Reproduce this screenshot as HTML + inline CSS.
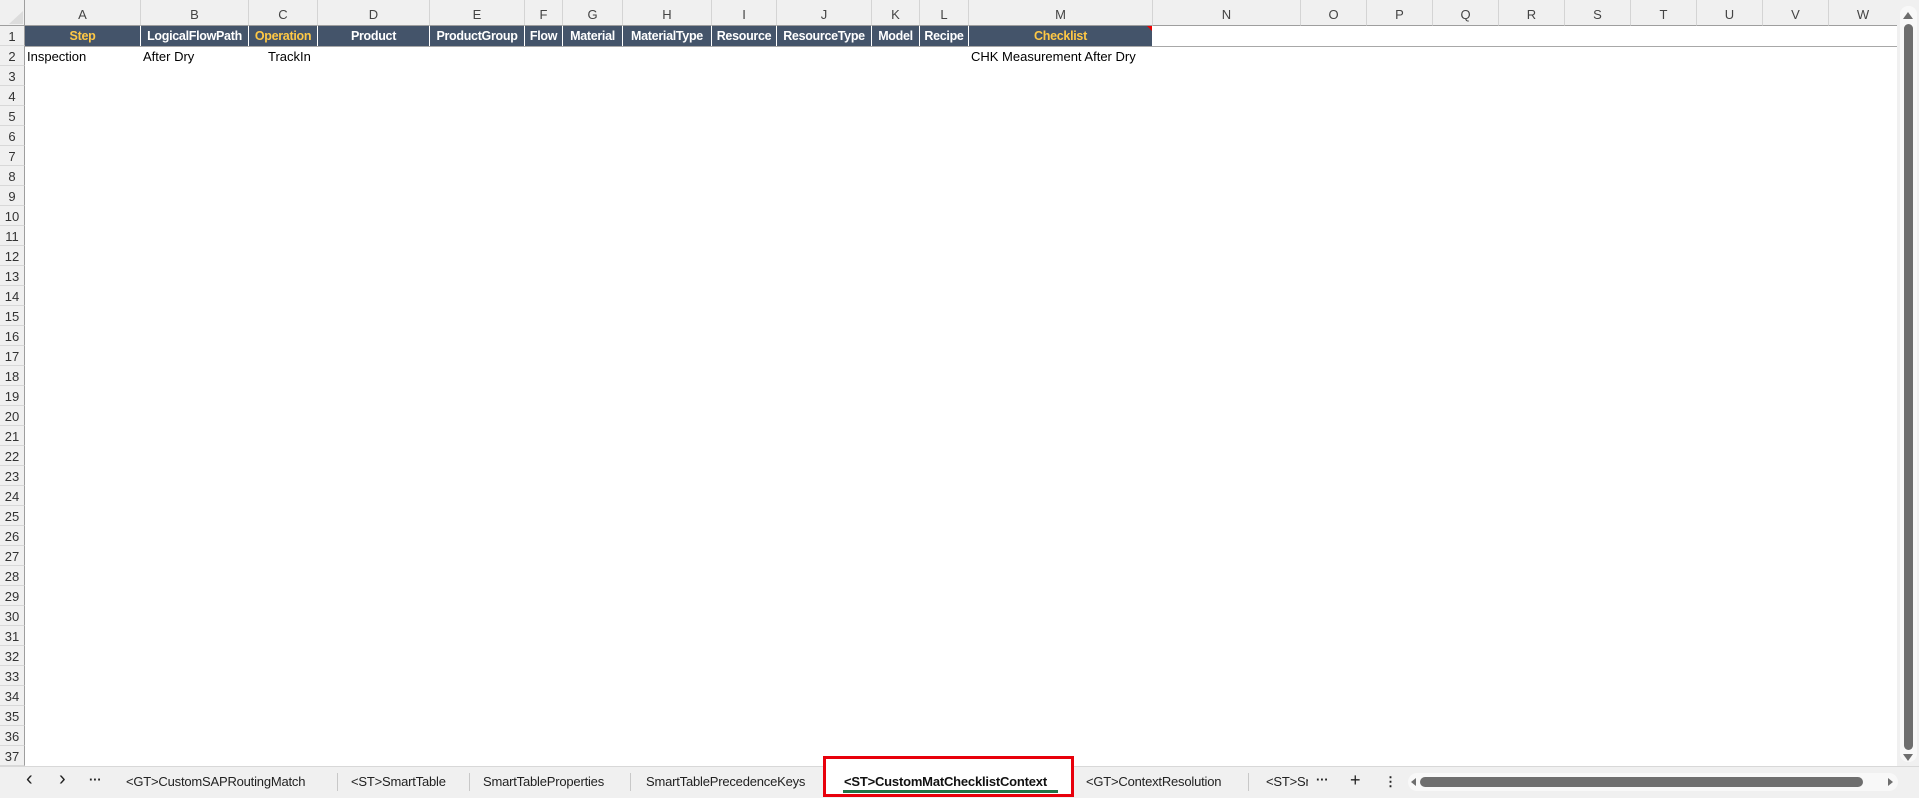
<!DOCTYPE html><html><head><meta charset="utf-8"><style>
*{margin:0;padding:0;box-sizing:border-box}
body{width:1919px;height:798px;overflow:hidden;background:#fff;font-family:"Liberation Sans",Calibri,sans-serif;position:relative}
.a{position:absolute}
.ch{position:absolute;top:0;height:26px;background:#f0f0f0;border-right:1px solid #d4d4d4;border-bottom:1px solid #9e9e9e;font-size:13px;color:#444;text-align:center;line-height:30px}
.rh{position:absolute;left:0;width:25px;height:20px;background:#f0f0f0;border-bottom:1px solid #d8d8d8;border-right:1px solid #9e9e9e;font-size:13px;color:#333;text-align:center;line-height:21px}
.h{position:absolute;top:26px;height:20px;background:#44546a;color:#fff;font-weight:bold;font-size:12.5px;letter-spacing:-0.3px;text-align:center;line-height:20px;border-right:1px solid #fff;overflow:hidden;white-space:nowrap}
.y{color:#ffc845}
.c{position:absolute;font-size:13px;color:#000;line-height:20px;top:46px}
.tab{position:absolute;top:774px;font-size:13px;color:#222;white-space:nowrap;letter-spacing:-0.2px}
.sep{position:absolute;top:773px;width:1px;height:18px;background:#c8c8c8}
</style></head><body>
<div class="a" style="left:0;top:0;width:25px;height:26px;background:#f0f0f0;border-right:1px solid #9e9e9e;border-bottom:1px solid #9e9e9e"></div>
<div class="a" style="left:9px;top:11px;width:0;height:0;border-left:14px solid transparent;border-bottom:13px solid #dcdcdc"></div>
<div class="ch" style="left:25px;width:116px">A</div>
<div class="ch" style="left:141px;width:108px">B</div>
<div class="ch" style="left:249px;width:69px">C</div>
<div class="ch" style="left:318px;width:112px">D</div>
<div class="ch" style="left:430px;width:95px">E</div>
<div class="ch" style="left:525px;width:38px">F</div>
<div class="ch" style="left:563px;width:60px">G</div>
<div class="ch" style="left:623px;width:89px">H</div>
<div class="ch" style="left:712px;width:65px">I</div>
<div class="ch" style="left:777px;width:95px">J</div>
<div class="ch" style="left:872px;width:48px">K</div>
<div class="ch" style="left:920px;width:49px">L</div>
<div class="ch" style="left:969px;width:184px">M</div>
<div class="ch" style="left:1153px;width:148px">N</div>
<div class="ch" style="left:1301px;width:66px">O</div>
<div class="ch" style="left:1367px;width:66px">P</div>
<div class="ch" style="left:1433px;width:66px">Q</div>
<div class="ch" style="left:1499px;width:66px">R</div>
<div class="ch" style="left:1565px;width:66px">S</div>
<div class="ch" style="left:1631px;width:66px">T</div>
<div class="ch" style="left:1697px;width:66px">U</div>
<div class="ch" style="left:1763px;width:66px">V</div>
<div class="ch" style="left:1829px;width:68px;border-right:none">W</div>

<div class="h y" style="left:25px;width:116px">Step</div>
<div class="h" style="left:141px;width:108px">LogicalFlowPath</div>
<div class="h y" style="left:249px;width:69px">Operation</div>
<div class="h" style="left:318px;width:112px">Product</div>
<div class="h" style="left:430px;width:95px">ProductGroup</div>
<div class="h" style="left:525px;width:38px">Flow</div>
<div class="h" style="left:563px;width:60px">Material</div>
<div class="h" style="left:623px;width:89px">MaterialType</div>
<div class="h" style="left:712px;width:65px">Resource</div>
<div class="h" style="left:777px;width:95px">ResourceType</div>
<div class="h" style="left:872px;width:48px">Model</div>
<div class="h" style="left:920px;width:49px">Recipe</div>
<div class="h y" style="left:969px;width:184px">Checklist</div>
<div class="a" style="left:1147px;top:26px;width:0;height:0;border-left:5px solid transparent;border-top:5px solid #e00"></div>
<div class="a" style="left:25px;top:46px;width:1872px;height:1px;background:#a8a8a8"></div>

<div class="c" style="left:27px;top:47px">Inspection</div>
<div class="c" style="left:143px;top:47px">After Dry</div>
<div class="c" style="left:268px;top:47px">TrackIn</div>
<div class="c" style="left:971px;top:47px">CHK Measurement After Dry</div>

<div id="rows"></div>
<script>
var h='';for(var i=1;i<=37;i++){h+='<div class="rh" style="top:'+(26+(i-1)*20)+'px">'+i+'</div>';}
document.getElementById('rows').innerHTML=h;
</script>

<div class="a" style="left:1897px;top:0;width:22px;height:766px;background:#f0f0f0"></div>
<div class="a" style="left:1900px;top:6px;width:17px;height:756px;background:#f8f8f8;border-radius:8px"></div>
<div class="a" style="left:1903px;top:12px;width:0;height:0;border-left:5px solid transparent;border-right:5px solid transparent;border-bottom:7px solid #6e6e6e"></div>
<div class="a" style="left:1904px;top:24px;width:9px;height:726px;background:#6e6e6e;border-radius:5px"></div>
<div class="a" style="left:1903px;top:754px;width:0;height:0;border-left:5px solid transparent;border-right:5px solid transparent;border-top:7px solid #6e6e6e"></div>

<div class="a" style="left:0;top:766px;width:1919px;height:32px;background:#f0f0f0;border-top:1px solid #d8d8d8"></div>
<div class="tab" style="left:26px;font-size:20px;top:768px">‹</div>
<div class="tab" style="left:59px;font-size:20px;top:768px">›</div>
<div class="tab" style="left:89px;font-weight:bold;top:772px">···</div>
<div class="tab" style="left:126px">&lt;GT&gt;CustomSAPRoutingMatch</div>
<div class="sep" style="left:337px"></div>
<div class="tab" style="left:351px">&lt;ST&gt;SmartTable</div>
<div class="sep" style="left:469px"></div>
<div class="tab" style="left:483px">SmartTableProperties</div>
<div class="sep" style="left:630px"></div>
<div class="tab" style="left:646px">SmartTablePrecedenceKeys</div>
<div class="a" style="left:823px;top:756px;width:251px;height:41px;border:3px solid #e8000b;background:#fff"></div>
<div class="tab" style="left:844px;font-weight:bold;color:#111">&lt;ST&gt;CustomMatChecklistContext</div>
<div class="a" style="left:843px;top:790px;width:215px;height:3px;background:#217346"></div>
<div class="tab" style="left:1086px">&lt;GT&gt;ContextResolution</div>
<div class="sep" style="left:1248px"></div>
<div class="tab" style="left:1266px;width:42px;overflow:hidden">&lt;ST&gt;SmartTable</div>
<div class="tab" style="left:1316px;font-weight:bold;top:772px">···</div>
<div class="tab" style="left:1350px;font-size:18px;top:770px">+</div>
<div class="tab" style="left:1384px;font-weight:bold">⋮</div>
<div class="a" style="left:1408px;top:773px;width:490px;height:18px;background:#f8f8f8;border-radius:9px"></div>
<div class="a" style="left:1411px;top:778px;width:0;height:0;border-top:4px solid transparent;border-bottom:4px solid transparent;border-right:5px solid #6e6e6e"></div>
<div class="a" style="left:1420px;top:777px;width:443px;height:10px;background:#6e6e6e;border-radius:5px"></div>
<div class="a" style="left:1888px;top:778px;width:0;height:0;border-top:4px solid transparent;border-bottom:4px solid transparent;border-left:5px solid #6e6e6e"></div>
</body></html>
